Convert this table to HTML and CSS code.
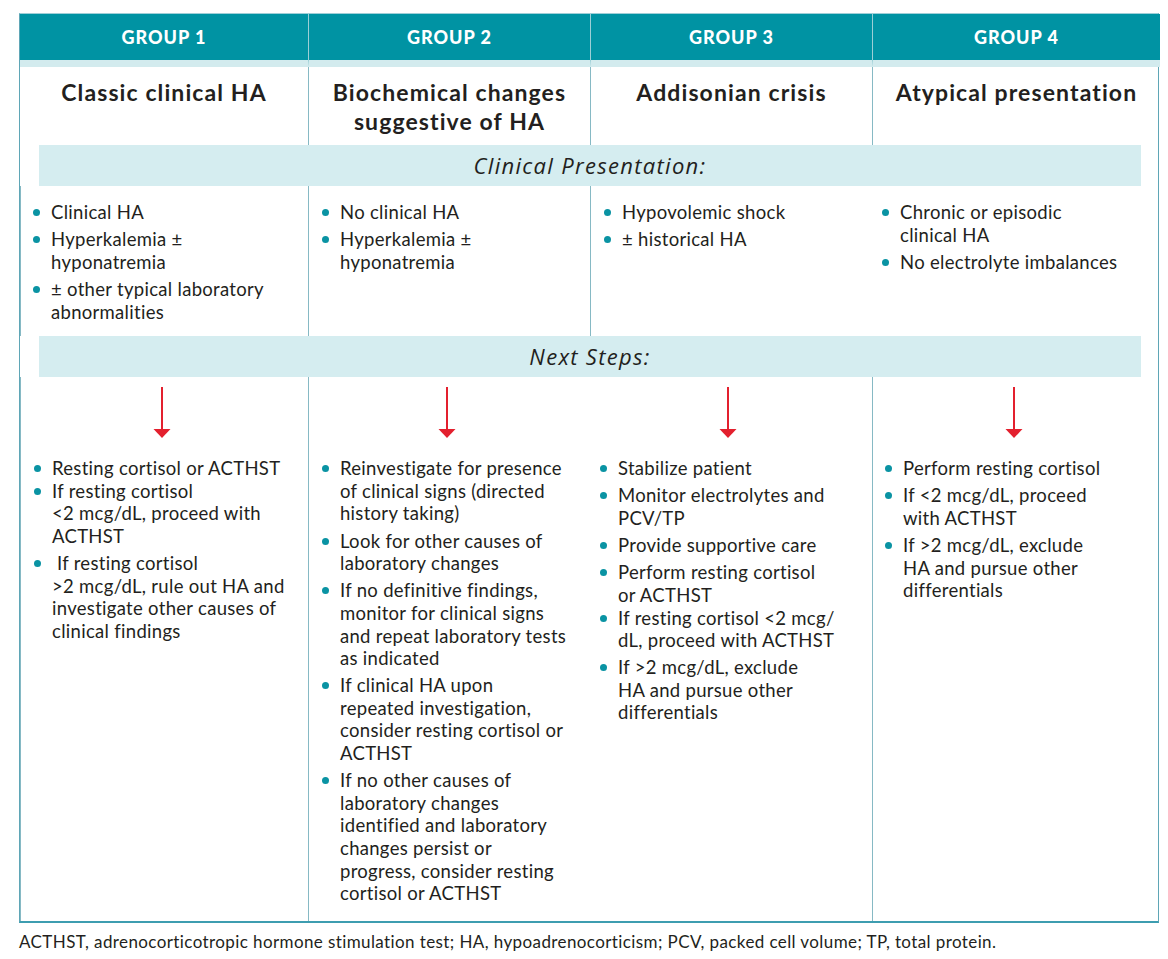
FILE: index.html
```html
<!DOCTYPE html>
<html lang="en">
<head>
<meta charset="utf-8">
<title>Hypoadrenocorticism groups</title>
<link rel="stylesheet" href="styles.css">
</head>
<body>
<div class="page">
  <div class="chart">
    <div class="cell group">GROUP 1</div>
    <div class="cell group">GROUP 2</div>
    <div class="cell group">GROUP 3</div>
    <div class="cell group">GROUP 4</div>

    <div class="cell title">Classic clinical HA</div>
    <div class="cell title">Biochemical changes<br>suggestive of HA</div>
    <div class="cell title">Addisonian crisis</div>
    <div class="cell title">Atypical presentation</div>

    <div class="band">Clinical Presentation:</div>

    <div class="cell body">
      <ul class="list">
        <li>Clinical HA</li>
        <li>Hyperkalemia ±<br>hyponatremia</li>
        <li>± other typical laboratory<br>abnormalities</li>
      </ul>
    </div>
    <div class="cell body">
      <ul class="list">
        <li>No clinical HA</li>
        <li>Hyperkalemia ±<br>hyponatremia</li>
      </ul>
    </div>
    <div class="cell body">
      <ul class="list">
        <li>Hypovolemic shock</li>
        <li>± historical HA</li>
      </ul>
    </div>
    <div class="cell body">
      <ul class="list">
        <li>Chronic or episodic<br>clinical HA</li>
        <li>No electrolyte imbalances</li>
      </ul>
    </div>

    <div class="band">Next Steps:</div>

    <div class="cell body steps">
      <svg class="arrow" width="18" height="51" viewBox="0 0 18 51" aria-hidden="true"><rect x="8" y="0" width="2" height="43" fill="#e3202e"/><polygon points="0.5,42 17.5,42 9,51" fill="#e3202e"/></svg>
      <ul class="list">
        <li>Resting cortisol or ACTHST</li>
        <li class="tight">If resting cortisol<br>&lt;2 mcg/dL, proceed with<br>ACTHST</li>
        <li>&nbsp;If resting cortisol<br>&gt;2 mcg/dL, rule out HA and<br>investigate other causes of<br>clinical findings</li>
      </ul>
    </div>
    <div class="cell body steps">
      <svg class="arrow" width="18" height="51" viewBox="0 0 18 51" aria-hidden="true"><rect x="8" y="0" width="2" height="43" fill="#e3202e"/><polygon points="0.5,42 17.5,42 9,51" fill="#e3202e"/></svg>
      <ul class="list">
        <li>Reinvestigate for presence<br>of clinical signs (directed<br>history taking)</li>
        <li>Look for other causes of<br>laboratory changes</li>
        <li>If no definitive findings,<br>monitor for clinical signs<br>and repeat laboratory tests<br>as indicated</li>
        <li>If clinical HA upon<br>repeated investigation,<br>consider resting cortisol or<br>ACTHST</li>
        <li>If no other causes of<br>laboratory changes<br>identified and laboratory<br>changes persist or<br>progress, consider resting<br>cortisol or ACTHST</li>
      </ul>
    </div>
    <div class="cell body steps">
      <svg class="arrow" width="18" height="51" viewBox="0 0 18 51" aria-hidden="true"><rect x="8" y="0" width="2" height="43" fill="#e3202e"/><polygon points="0.5,42 17.5,42 9,51" fill="#e3202e"/></svg>
      <ul class="list">
        <li>Stabilize patient</li>
        <li>Monitor electrolytes and<br>PCV/TP</li>
        <li>Provide supportive care</li>
        <li>Perform resting cortisol<br>or ACTHST</li>
        <li class="tight">If resting cortisol &lt;2 mcg/<br>dL, proceed with ACTHST</li>
        <li>If &gt;2 mcg/dL, exclude<br>HA and pursue other<br>differentials</li>
      </ul>
    </div>
    <div class="cell body steps">
      <svg class="arrow" width="18" height="51" viewBox="0 0 18 51" aria-hidden="true"><rect x="8" y="0" width="2" height="43" fill="#e3202e"/><polygon points="0.5,42 17.5,42 9,51" fill="#e3202e"/></svg>
      <ul class="list">
        <li>Perform resting cortisol</li>
        <li>If &lt;2 mcg/dL, proceed<br>with ACTHST</li>
        <li>If &gt;2 mcg/dL, exclude<br>HA and pursue other<br>differentials</li>
      </ul>
    </div>
  </div>
  <p class="note">ACTHST, adrenocorticotropic hormone stimulation test; HA, hypoadrenocorticism; PCV, packed cell volume; TP, total protein.</p>
</div>
</body>
</html>
```

FILE: styles.css
```css
html, body {
  margin: 0;
  padding: 0;
  background: #ffffff;
}

body {
  font-family: "Lato", "Open Sans", "Liberation Sans", sans-serif;
  color: #231f20;
}

.page {
  padding: 13px 9px 0 19px;
}

.chart {
  display: grid;
  grid-template-columns: 288px 282px 282px 288px;
  width: 1140px;
  border-left: 1px solid #5fa6b6;
  border-right: 1px solid #5fa6b6;
  border-bottom: 2px solid #3d9db0;
  border-top: 1px solid #9fcfd8;
  box-sizing: border-box;
}

.cell {
  border-left: 1px solid #86b9c4;
  min-width: 0;
}

.cell:nth-child(4n+1) {
  border-left: none;
}

.group {
  background: #0093a3;
  color: #ffffff;
  font-weight: 900;
  font-size: 18px;
  letter-spacing: 1px;
  height: 46px;
  line-height: 46px;
  text-align: center;
  border-left-color: #9ccfd6;
  border-bottom: 7px solid #d3ebee;
}

.title {
  font-weight: 700;
  font-size: 23px;
  letter-spacing: 1.1px;
  line-height: 29px;
  text-align: center;
  padding: 11px 0 10px;
  height: 57px;
}

.band {
  grid-column: 1 / -1;
  margin: 0 19px 0 19px;
  background: #d5edf0;
  height: 41px;
  line-height: 41px;
  text-align: center;
  font-family: "Open Sans", "Lato", sans-serif;
  font-style: italic;
  font-size: 22px;
  letter-spacing: 1.3px;
}

.body {
  padding: 15px 6px 13px 0;
}

.steps {
  padding-top: 10px;
  padding-bottom: 16px;
  display: flex;
  flex-direction: column;
}

.arrow {
  display: block;
  align-self: center;
  margin-bottom: 19px;
}

.list {
  list-style: none;
  margin: 0;
  padding: 0 0 0 31px;
  font-size: 18.5px;
  letter-spacing: 0.3px;
  line-height: 22.6px;
}

.body:nth-child(4n+1) .list {
  padding-left: 28px;
}

.body:nth-child(4n+2) .list {
  padding-left: 30px;
}

.list li {
  position: relative;
  margin-top: 4.6px;
}

.list li:first-child,
.list li.tight {
  margin-top: 0;
}

.list li::before {
  content: "";
  position: absolute;
  left: -18px;
  top: 8px;
  width: 7px;
  height: 7px;
  border-radius: 50%;
  background: #0a93a3;
}

.note {
  margin: 9px 0 0 0;
  font-size: 17px;
  letter-spacing: 0.4px;
  line-height: 20px;
}
```
